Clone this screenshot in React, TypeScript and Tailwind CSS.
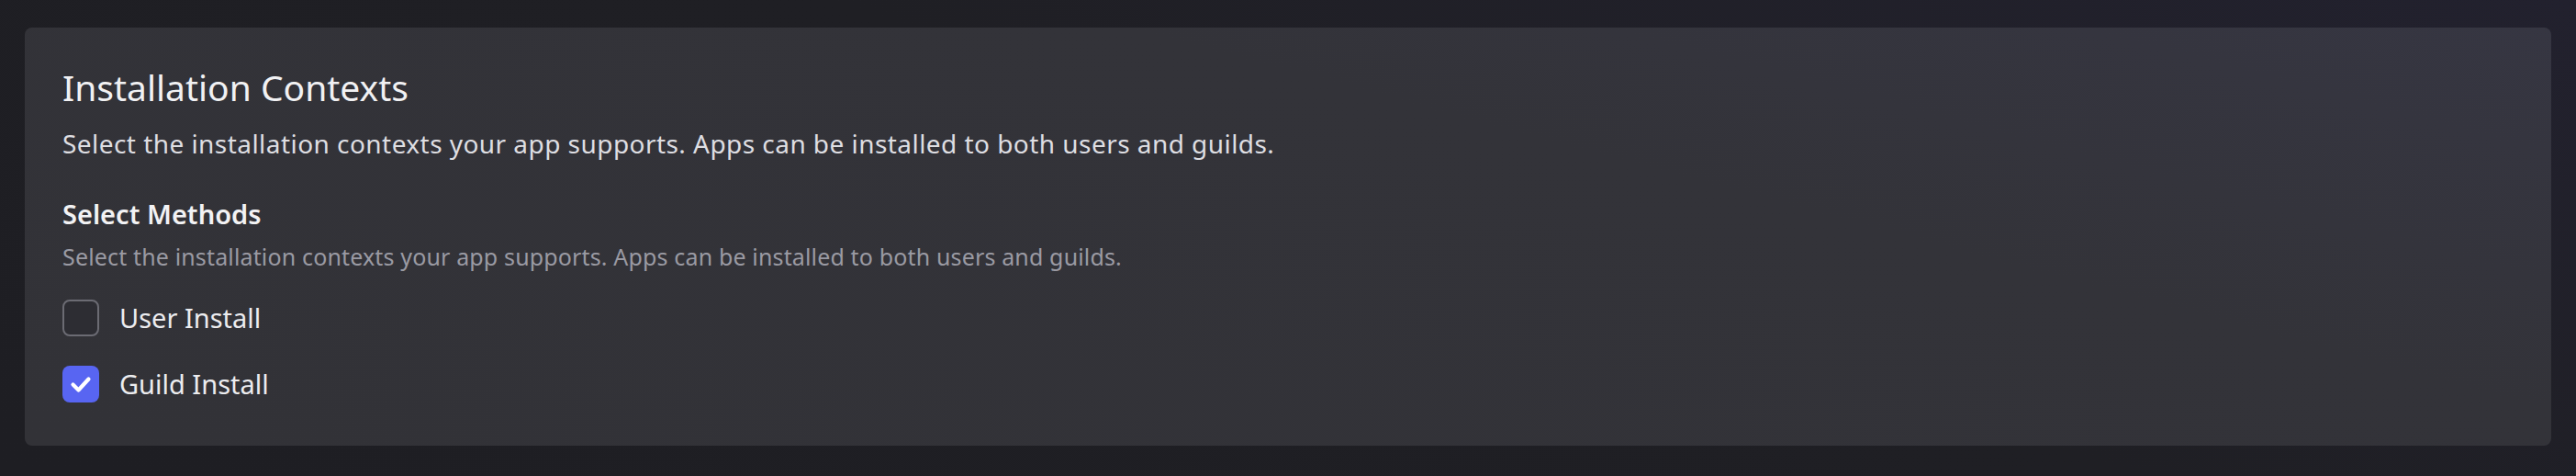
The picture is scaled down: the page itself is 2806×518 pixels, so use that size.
import React from "react";

function Checkbox({ checked }: { checked: boolean }) {
  if (checked) {
    return (
      <div className="w-[40px] h-[40px] rounded-[8px] bg-[#5865f2] flex items-center justify-center shrink-0">
        <svg width="40" height="40" viewBox="0 0 40 40" fill="none">
          <path d="M11.5 20.5 L17.5 26.5 L28.5 14.5" stroke="#ffffff" strokeWidth="4.2" strokeLinecap="round" strokeLinejoin="round" />
        </svg>
      </div>
    );
  }
  return <div className="w-[40px] h-[40px] rounded-[8px] border-[2px] border-[#6b6b73] bg-[#2d2d33] shrink-0" />;
}

export default function App() {
  const font = { fontFamily: '"Noto Sans", "Open Sans", sans-serif' };
  return (
    <div
      className="w-[2806px] h-[518px] bg-[linear-gradient(200deg,#22212e_0%,#1f1f24_45%,#1e1e23_100%)] pl-[27px] pr-[27px] pt-[30px] pb-[33px]"
      style={font}
    >
      <div className="h-[455px] rounded-[8px] bg-[linear-gradient(195deg,#363642_0%,#333339_35%,#323237_100%)] pl-[41px] pt-[41px]">
        <h2 className="text-[39px] leading-[48px] text-[#f1f1f3] font-normal">Installation Contexts</h2>
        <p className="mt-[19px] text-[28px] leading-[36px] text-[#dedee2] tracking-[0.45px]">
          Select the installation contexts your app supports. Apps can be installed to both users and guilds.
        </p>
        <h3 className="mt-[40px] text-[29px] leading-[38px] text-[#f2f2f4] font-semibold">Select Methods</h3>
        <p className="mt-[11px] text-[25px] leading-[32px] text-[#9a9aa3] tracking-[0.15px]">
          Select the installation contexts your app supports. Apps can be installed to both users and guilds.
        </p>
        <div className="mt-[31px] flex flex-col gap-[32px]">
          <div className="flex items-center gap-[22px]">
            <Checkbox checked={false} />
            <span className="text-[29px] leading-[40px] text-[#ececef]">User Install</span>
          </div>
          <div className="flex items-center gap-[22px]">
            <Checkbox checked={true} />
            <span className="text-[29px] leading-[40px] text-[#ececef]">Guild Install</span>
          </div>
        </div>
      </div>
    </div>
  );
}
